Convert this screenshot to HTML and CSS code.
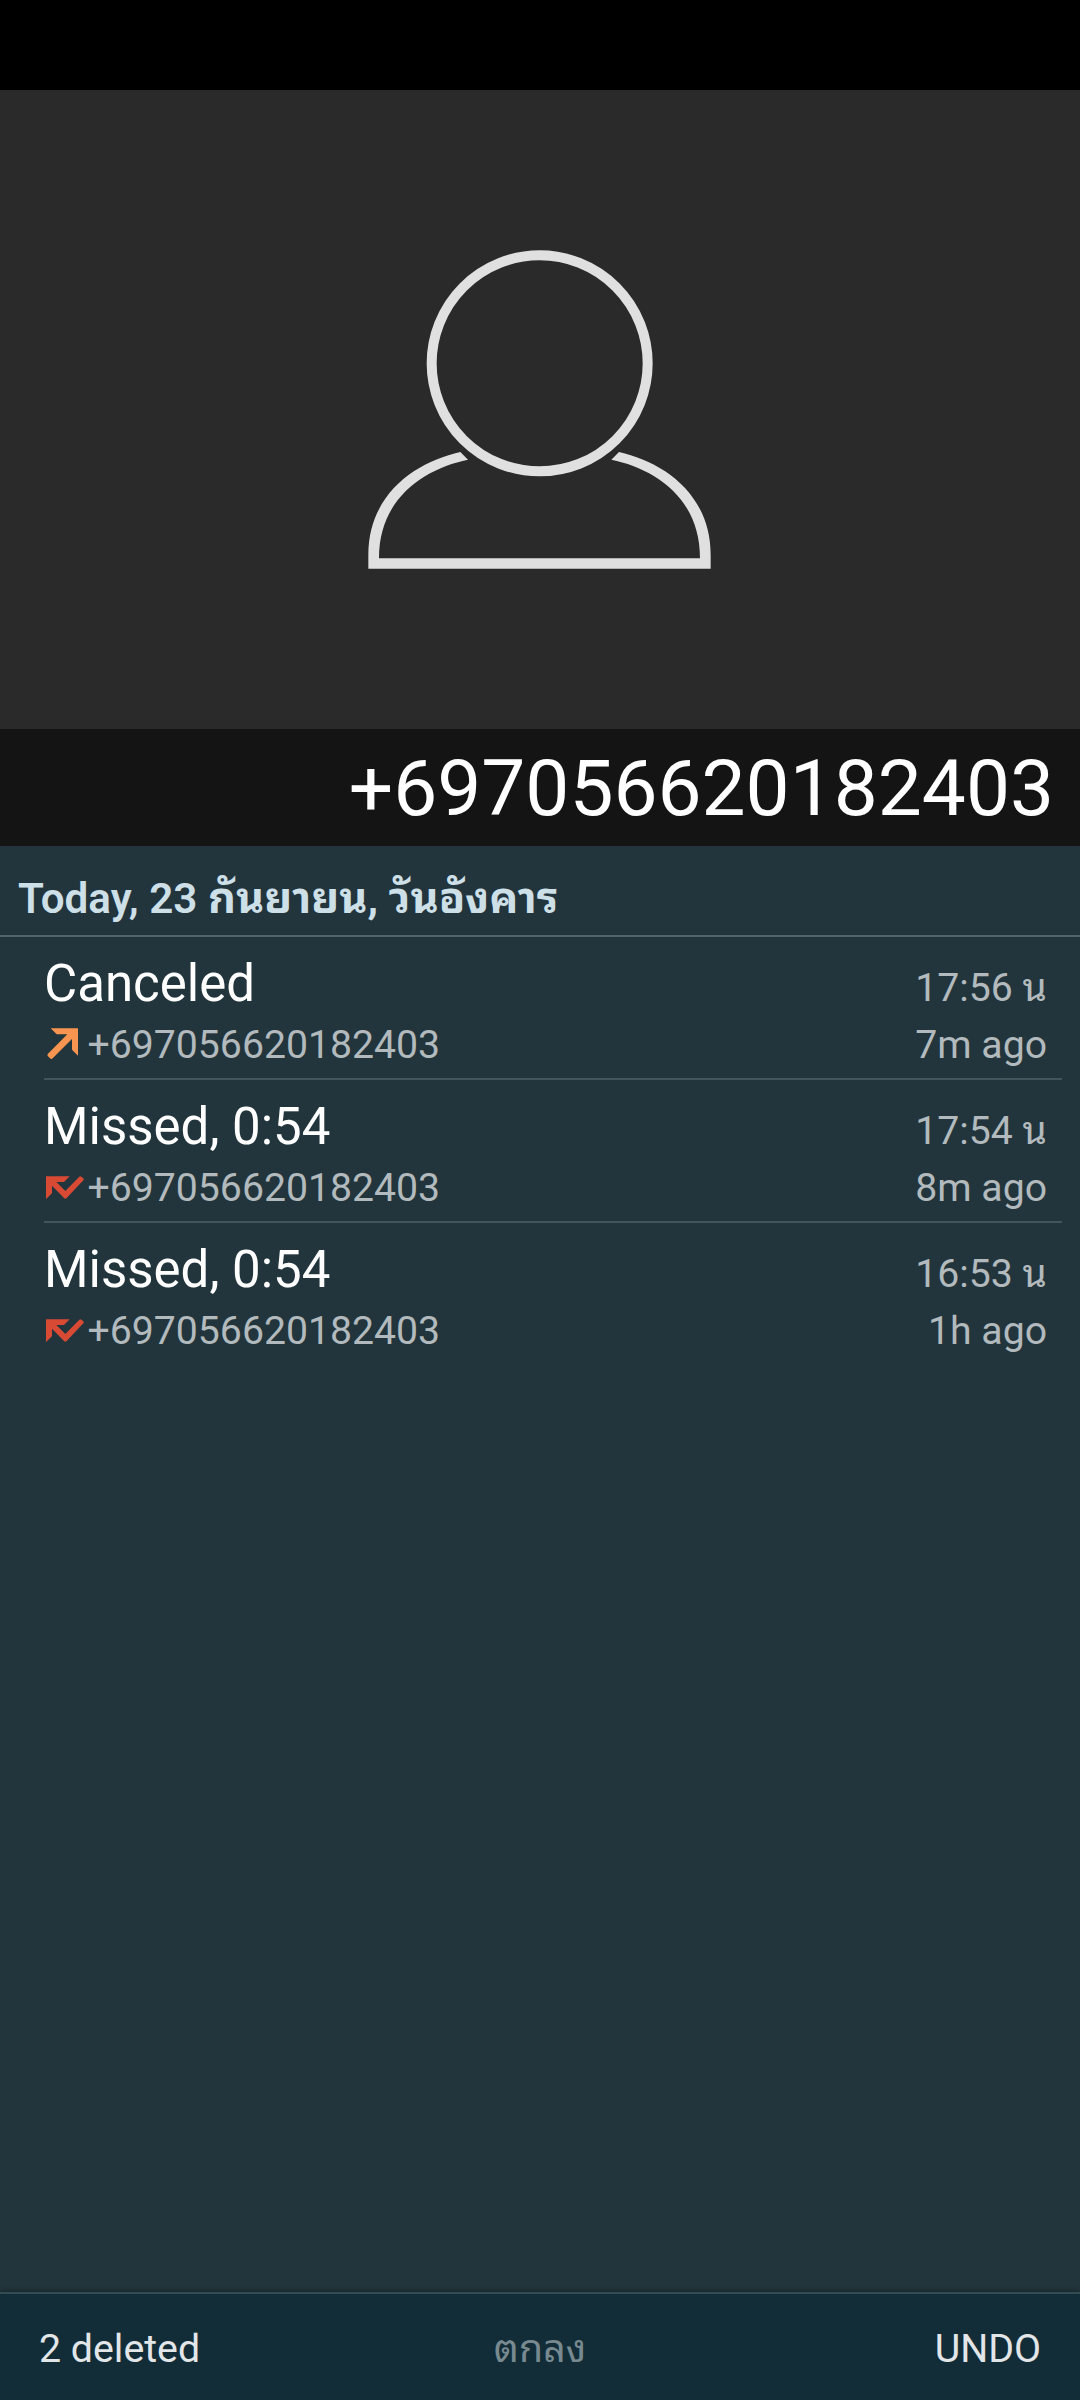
FILE: index.html
```html
<!DOCTYPE html>
<html lang="th">
<head>
    <meta charset="UTF-8">
    <meta name="viewport" content="width=device-width, initial-scale=1.0">
    <title>Call details</title>
    <link rel="stylesheet" href="styles.css">
</head>
<body>
    <div class="status-bar"></div>
    <div class="photo">
        <svg class="avatar" viewBox="0 0 1200 1080">
            <circle cx="599" cy="400" r="324" fill="none" stroke="#e0e0e0" stroke-width="30"/>
            <path fill="#e0e0e0" d="M361 666C230 695 85 790 85 975V1016H1112V975C1112 790 967 695 837 666L814 689C940 715 1080 800 1080 985H117C117 800 258 715 384 689Z"/>
        </svg>
    </div>
    <div class="contact-number">+697056620182403</div>
    <h2 class="date-header">Today, 23 <span class="thai-date">กันยายน, วันอังคาร</span></h2>
    <div class="call-list">
        <div class="call">
            <div class="title">Canceled</div>
            <div class="time">17:56 น</div>
            <div class="number">
                <svg class="icon" viewBox="42 53 126 102"><path fill="#f79550" d="M62 54H144V136L126 118V86L68 144Q64 148 60 144L54 138Q50 134 54 130L112 72H80Z"/></svg>
                <span>+697056620182403</span>
            </div>
            <div class="ago">7m ago</div>
        </div>
        <div class="call">
            <div class="title">Missed, 0:54</div>
            <div class="time">17:54 น</div>
            <div class="number">
                <svg class="icon" viewBox="42 47 126 102"><path fill="#d94a35" d="M48 63H119L102 80H79L106 107L148 64Q151 61 154 64L160 69Q163 72 160 75L110 128Q106 132 102 128L66 91V114L48 131Z"/></svg>
                <span>+697056620182403</span>
            </div>
            <div class="ago">8m ago</div>
        </div>
        <div class="call">
            <div class="title">Missed, 0:54</div>
            <div class="time">16:53 น</div>
            <div class="number">
                <svg class="icon" viewBox="42 47 126 102"><path fill="#d94a35" d="M48 63H119L102 80H79L106 107L148 64Q151 61 154 64L160 69Q163 72 160 75L110 128Q106 132 102 128L66 91V114L48 131Z"/></svg>
                <span>+697056620182403</span>
            </div>
            <div class="ago">1h ago</div>
        </div>
    </div>
    <div class="footer">
        <div class="deleted">2 deleted</div>
        <div class="ok">ตกลง</div>
        <div class="undo">UNDO</div>
    </div>
</body>
</html>
```
FILE: styles.css
```css
* {
    box-sizing: border-box;
}
body {
    display: flex;
    flex-direction: column;
    height: 2400px;
    margin: 0;
    font-family: Roboto, "Noto Sans Thai Looped", "Noto Looped Thai", Loma, Waree, Garuda, "Noto Sans Thai", sans-serif;
    background-color: #22353c;
    color: #fff;
    white-space: nowrap;
}
.status-bar {
    height: 90px;
    background-color: #000;
}
.photo {
    height: 639px;
    padding-top: 140px;
    background-color: #2a2a2a;
}
.avatar {
    display: block;
    width: 400px;
    height: 360px;
    margin: 0 auto;
}
.contact-number {
    height: 117px;
    padding: 1px 26px 0 0;
    background-color: #141414;
    font-size: 78.4px;
    line-height: 117px;
    text-align: right;
}
.date-header {
    height: 91px;
    margin: 0;
    padding: 16px 18px 0;
    border-bottom: 2px solid #50636a;
    color: #cddfe7;
    font-size: 42.2px;
    font-weight: 600;
    line-height: 73px;
}
.thai-date {
    font-size: 43.2px;
    font-weight: 700;
}
.call-list {
    flex: 1;
    padding: 0 18px 0 44px;
}
.call {
    display: grid;
    grid-template-columns: 1fr auto;
    grid-template-rows: 60px 46px;
    row-gap: 8px;
    align-items: baseline;
    height: 143px;
    padding: 17px 15px 0 0;
    border-bottom: 2px solid #43545b;
    color: #b2babd;
    font-size: 39.2px;
    line-height: 46px;
}
.call:last-child {
    border-bottom: none;
}
.title {
    color: #fff;
    font-size: 51px;
    line-height: 60px;
}
.time,
.ago {
    text-align: right;
}
.number {
    display: flex;
    align-items: center;
}
.number,
.ago {
    align-self: center;
}
.icon {
    width: 42px;
    height: 34px;
    margin-right: 1.5px;
}
.footer {
    display: grid;
    grid-template-columns: 1fr auto 1fr;
    height: 108px;
    padding: 2px 39px 0;
    border-top: 2px solid #334b53;
    background-color: #122d37;
    box-shadow: 0 -1px 5px rgba(0, 0, 0, 0.35);
    color: #e3e6e8;
    font-size: 39.3px;
    line-height: 106px;
}
.ok {
    color: #788a90;
}
.undo {
    text-align: right;
}
```
